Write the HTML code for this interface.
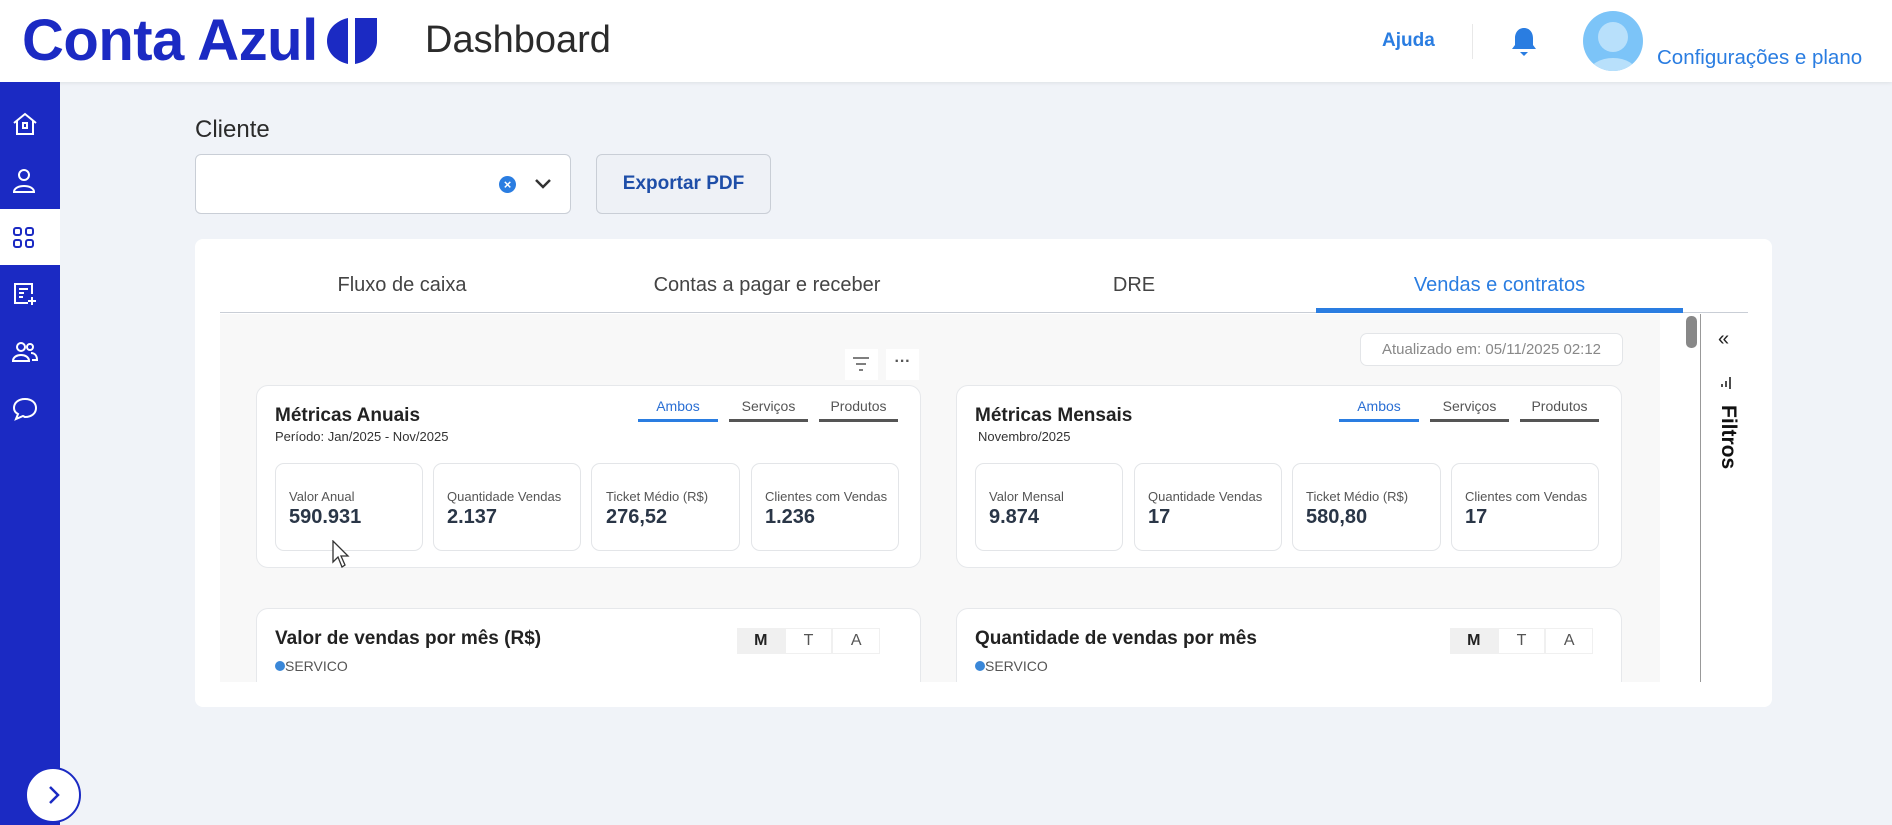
<!DOCTYPE html>
<html><head><meta charset="utf-8"><style>
*{box-sizing:border-box;margin:0;padding:0}
body{width:1892px;height:825px;overflow:hidden;background:#f0f3f8;font-family:"Liberation Sans",sans-serif;position:relative}
.a{position:absolute}
.hdr{left:0;top:0;width:1892px;height:82px;background:#fff;box-shadow:0 1px 4px rgba(0,0,0,.08)}
.side{left:0;top:82px;width:60px;height:743px;background:#1b2ac3}
.n{font-family:"Liberation Sans",sans-serif}
.card{background:#fff;border:1px solid #e6e8eb;border-radius:12px}
.mb{background:#fff;border:1px solid #e3e5e8;border-radius:9px}
.lbl{font-size:13px;color:#555;}
.val{font-size:20px;font-weight:bold;color:#2a3647}
.seg{font-size:14px;color:#555;text-align:center;border-bottom:3px solid #555;height:24px}
</style></head><body>
<div class="a hdr"></div>
<div class="a" style="left:22px;top:7px;font-size:58px;font-weight:bold;color:#1b2ac3;letter-spacing:-0.5px">Conta Azul</div>
<svg class="a" style="left:327px;top:18px" width="50" height="46" viewBox="0 0 50 46"><path d="M21 0 C8 3 0 12 0 23 C0 34 8 43 21 46 Z" fill="#1b2ac3"/><path d="M28 0 L50 0 L50 23 C50 35 40 44 28 46 Z" fill="#1b2ac3"/></svg>
<div class="a" style="left:425px;top:19px;font-size:38px;color:#2b2b2b">Dashboard</div>
<div class="a" style="left:1382px;top:30px;font-size:19px;font-weight:bold;color:#2a7de1">Ajuda</div>
<div class="a" style="left:1472px;top:24px;width:1px;height:35px;background:#e8e8e8"></div>
<svg class="a" style="left:1510px;top:26px" width="28" height="32" viewBox="0 0 28 32"><path d="M14 2 C8 2 5 7 5 12 L5 19 L2 23 L26 23 L23 19 L23 12 C23 7 20 2 14 2Z" fill="#2a7de1"/><path d="M10 26 L18 26 L14 30Z" fill="#2a7de1"/></svg>
<div class="a" style="left:1583px;top:11px;width:60px;height:60px;border-radius:50%;background:#7cc4f8;overflow:hidden"><div class="a" style="left:15px;top:11px;width:30px;height:30px;border-radius:50%;background:#b8e0fb"></div><div class="a" style="left:6px;top:47px;width:48px;height:30px;border-radius:50%;background:#b8e0fb"></div></div>
<div class="a" style="left:1657px;top:46px;font-size:20.5px;color:#2a7de1">Configurações e plano</div>

<div class="a side"></div>
<div class="a" style="left:0;top:209px;width:60px;height:56px;background:#fff"></div>
<svg class="a" style="left:12px;top:111px" width="26" height="26" viewBox="0 0 26 26" fill="none" stroke="#fff" stroke-width="2"><path d="M2 12 L13 3 L24 12 M5 10 V23 H21 V10"/><rect x="11" y="12" width="4" height="5"/></svg>
<svg class="a" style="left:11px;top:168px" width="26" height="26" viewBox="0 0 26 26" fill="none" stroke="#fff" stroke-width="2"><circle cx="13" cy="7" r="5"/><path d="M3 24 C3 16 23 16 23 24 Z"/></svg>
<svg class="a" style="left:12px;top:226px" width="24" height="24" viewBox="0 0 24 24" fill="none" stroke="#1b2ac3" stroke-width="2"><rect x="2" y="2" width="7" height="7" rx="2"/><rect x="14" y="2" width="7" height="7" rx="2"/><rect x="2" y="14" width="7" height="7" rx="2"/><rect x="14" y="14" width="7" height="7" rx="2"/></svg>
<svg class="a" style="left:12px;top:281px" width="26" height="26" viewBox="0 0 26 26" fill="none" stroke="#fff" stroke-width="2"><path d="M16 22 H3 V3 H20 V13"/><path d="M7 8 H16 M7 12 H12 M7 16 H11"/><path d="M20 16 V24 M16 20 H24"/></svg>
<svg class="a" style="left:11px;top:339px" width="28" height="26" viewBox="0 0 28 26" fill="none" stroke="#fff" stroke-width="2"><circle cx="10" cy="8" r="4"/><path d="M2 22 C2 14 18 14 18 22Z"/><circle cx="19" cy="8" r="3"/><path d="M20 14 C24 14 26 17 26 21 H21"/></svg>
<svg class="a" style="left:12px;top:396px" width="26" height="26" viewBox="0 0 26 26" fill="none" stroke="#fff" stroke-width="2"><path d="M13 3 C6 3 2 7 2 12 C2 15 4 17 6 18 L4 23 L11 20 C12 20 12 21 13 21 C20 21 24 17 24 12 C24 7 20 3 13 3Z"/></svg>
<div class="a" style="left:25px;top:767px;width:56px;height:56px;border-radius:50%;background:#fff;border:2px solid #1b2ac3"></div>
<svg class="a" style="left:44px;top:784px" width="20" height="22" viewBox="0 0 20 22" fill="none" stroke="#1b2ac3" stroke-width="2.5"><path d="M6 3 L14 11 L6 19"/></svg>

<div class="a" style="left:195px;top:116px;font-size:24px;color:#2b2b2b">Cliente</div>
<div class="a" style="left:195px;top:154px;width:376px;height:60px;background:#fff;border:1px solid #c9ced6;border-radius:6px"></div>
<div class="a" style="left:499px;top:176px;width:17px;height:17px;border-radius:50%;background:#2a7de1;color:#fff;font-size:13px;font-weight:bold;text-align:center;line-height:17px">×</div>
<svg class="a" style="left:533px;top:176px" width="20" height="16" viewBox="0 0 20 16" fill="none" stroke="#333" stroke-width="2.5"><path d="M3 4 L10 11 L17 4"/></svg>
<div class="a" style="left:596px;top:154px;width:175px;height:60px;background:#eef1f6;border:1px solid #c9ced6;border-radius:6px;font-size:19px;font-weight:bold;color:#1e4ea8;text-align:center;line-height:58px">Exportar PDF</div>

<div class="a" style="left:195px;top:239px;width:1577px;height:468px;background:#fff;border-radius:8px"></div>
<div class="a" style="left:220px;top:312px;width:1528px;height:1px;background:#c9ced6"></div>
<div class="a" style="left:1316px;top:308px;width:367px;height:5px;background:#2a7de1"></div>
<div class="a" style="left:220px;top:274px;width:364px;text-align:center;font-size:20px;color:#444">Fluxo de caixa</div>
<div class="a" style="left:585px;top:274px;width:364px;text-align:center;font-size:20px;color:#444">Contas a pagar e receber</div>
<div class="a" style="left:952px;top:274px;width:364px;text-align:center;font-size:20px;color:#444">DRE</div>
<div class="a" style="left:1316px;top:274px;width:367px;text-align:center;font-size:20px;color:#2a7de1">Vendas e contratos</div>

<div class="a" style="left:220px;top:314px;width:1440px;height:368px;background:#f8f8f8"></div>
<div class="a" style="left:1686px;top:316px;width:11px;height:32px;background:#888;border-radius:5px"></div>
<div class="a" style="left:1700px;top:314px;width:1px;height:368px;background:#999"></div>
<div class="a" style="left:1718px;top:328px;font-size:20px;color:#222">«</div>
<svg class="a" style="left:1720px;top:376px" width="12" height="14" viewBox="0 0 12 14" stroke="#222" stroke-width="1.6"><path d="M10 1 V13 M6 5 V11 M2 8 V11"/></svg>
<div class="a" style="transform:rotate(90deg);transform-origin:left top;left:1740px;top:405px;font-size:21px;font-weight:bold;color:#111">Filtros</div>

<div class="a n" style="left:1360px;top:333px;width:263px;height:33px;background:#fff;border:1px solid #e3e5e8;border-radius:7px;font-size:15px;color:#888;text-align:center;line-height:31px">Atualizado em: 05/11/2025 02:12</div>
<div class="a" style="left:845px;top:349px;width:33px;height:31px;background:#fff"></div>
<svg class="a" style="left:851px;top:356px" width="20" height="16" viewBox="0 0 20 16" stroke="#555" stroke-width="1.5"><path d="M2 2 H18 M5 8 H15 M8 14 H12"/></svg>
<div class="a" style="left:886px;top:349px;width:33px;height:31px;background:#fff;text-align:center;font-size:16px;color:#555;line-height:26px;font-weight:bold">···</div>

<div class="a card" style="left:256px;top:385px;width:665px;height:183px"></div>
<div class="a n" style="left:275px;top:405px;font-size:19px;font-weight:bold;color:#222">Métricas Anuais</div>
<div class="a n" style="left:275px;top:429px;font-size:13px;color:#333">Período: Jan/2025 - Nov/2025</div>
<div class="a n seg" style="left:638px;top:398px;width:80px;color:#2a6fd4;border-color:#2a7de1">Ambos</div>
<div class="a n seg" style="left:729px;top:398px;width:79px">Serviços</div>
<div class="a n seg" style="left:819px;top:398px;width:79px">Produtos</div>
<div class="a mb" style="left:275px;top:463px;width:148px;height:88px"></div>
<div class="a mb" style="left:433px;top:463px;width:148px;height:88px"></div>
<div class="a mb" style="left:591px;top:463px;width:149px;height:88px"></div>
<div class="a mb" style="left:751px;top:463px;width:148px;height:88px"></div>
<div class="a n lbl" style="left:289px;top:489px">Valor Anual</div><div class="a n val" style="left:289px;top:506px">590.931</div>
<div class="a n lbl" style="left:447px;top:489px">Quantidade Vendas</div><div class="a n val" style="left:447px;top:506px">2.137</div>
<div class="a n lbl" style="left:606px;top:489px">Ticket Médio (R$)</div><div class="a n val" style="left:606px;top:506px">276,52</div>
<div class="a n lbl" style="left:765px;top:489px">Clientes com Vendas</div><div class="a n val" style="left:765px;top:506px">1.236</div>
<svg class="a" style="left:332px;top:540px" width="20" height="30" viewBox="0 0 20 30"><path d="M1 1 L1 22 L6 17 L10 27 L13 25 L9 16 L16 16 Z" fill="#fff" stroke="#333" stroke-width="1.3"/></svg>

<div class="a card" style="left:956px;top:385px;width:666px;height:183px"></div>
<div class="a n" style="left:975px;top:405px;font-size:19px;font-weight:bold;color:#222">Métricas Mensais</div>
<div class="a n" style="left:978px;top:429px;font-size:13px;color:#333">Novembro/2025</div>
<div class="a n seg" style="left:1339px;top:398px;width:80px;color:#2a6fd4;border-color:#2a7de1">Ambos</div>
<div class="a n seg" style="left:1430px;top:398px;width:79px">Serviços</div>
<div class="a n seg" style="left:1520px;top:398px;width:79px">Produtos</div>
<div class="a mb" style="left:975px;top:463px;width:148px;height:88px"></div>
<div class="a mb" style="left:1134px;top:463px;width:148px;height:88px"></div>
<div class="a mb" style="left:1292px;top:463px;width:149px;height:88px"></div>
<div class="a mb" style="left:1451px;top:463px;width:148px;height:88px"></div>
<div class="a n lbl" style="left:989px;top:489px">Valor Mensal</div><div class="a n val" style="left:989px;top:506px">9.874</div>
<div class="a n lbl" style="left:1148px;top:489px">Quantidade Vendas</div><div class="a n val" style="left:1148px;top:506px">17</div>
<div class="a n lbl" style="left:1306px;top:489px">Ticket Médio (R$)</div><div class="a n val" style="left:1306px;top:506px">580,80</div>
<div class="a n lbl" style="left:1465px;top:489px">Clientes com Vendas</div><div class="a n val" style="left:1465px;top:506px">17</div>

<div class="a card" style="left:256px;top:608px;width:665px;height:74px;border-bottom:none;border-radius:12px 12px 0 0"></div>
<div class="a n" style="left:275px;top:628px;font-size:19px;font-weight:bold;color:#222">Valor de vendas por mês (R$)</div>
<div class="a" style="left:275px;top:661px;width:10px;height:10px;border-radius:50%;background:#3a87d8"></div>
<div class="a n" style="left:285px;top:658px;font-size:14px;color:#555">SERVICO</div>
<div class="a n" style="left:737px;top:628px;width:143px;height:26px;background:#f0f0f0;display:flex;padding:1px;gap:2px">
<div style="flex:1;text-align:center;font-weight:bold;font-size:16px;line-height:24px;color:#222">M</div><div style="flex:1;background:#fff;text-align:center;font-size:16px;line-height:24px;color:#555">T</div><div style="flex:1;background:#fff;text-align:center;font-size:16px;line-height:24px;color:#555">A</div></div>
<div class="a card" style="left:956px;top:608px;width:666px;height:74px;border-bottom:none;border-radius:12px 12px 0 0"></div>
<div class="a n" style="left:975px;top:628px;font-size:19px;font-weight:bold;color:#222">Quantidade de vendas por mês</div>
<div class="a" style="left:975px;top:661px;width:10px;height:10px;border-radius:50%;background:#3a87d8"></div>
<div class="a n" style="left:985px;top:658px;font-size:14px;color:#555">SERVICO</div>
<div class="a n" style="left:1450px;top:628px;width:143px;height:26px;background:#f0f0f0;display:flex;padding:1px;gap:2px">
<div style="flex:1;text-align:center;font-weight:bold;font-size:16px;line-height:24px;color:#222">M</div><div style="flex:1;background:#fff;text-align:center;font-size:16px;line-height:24px;color:#555">T</div><div style="flex:1;background:#fff;text-align:center;font-size:16px;line-height:24px;color:#555">A</div></div>
</body></html>
